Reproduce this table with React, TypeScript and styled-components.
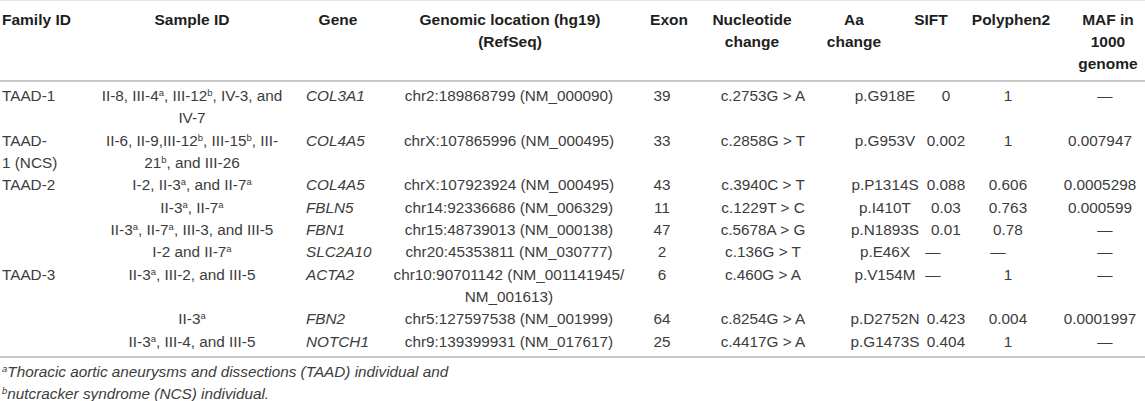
import React from "react";
import styled, { createGlobalStyle } from "styled-components";

const Global = createGlobalStyle`
  html, body { margin: 0; padding: 0; background: #ffffff; }
  body { font-family: "Liberation Sans", Arial, sans-serif; }
`;

const COLS = "97px 190px 102px 242px 76px 90px 114px 40px 120px 74px";

const Table = styled.div`
  width: 1145px;
  border-top: 1px solid #e4e4e4;
  font-size: 15.3px;
  line-height: 22px;
`;

const HeaderRow = styled.div`
  display: grid;
  grid-template-columns: ${COLS};
  padding: 8px 0 5px;
  border-bottom: 2px solid #c9c9c9;
`;

const HeadCell = styled.div<{ $left?: boolean }>`
  font-weight: 700;
  font-size: 15.5px;
  color: #1e1e1e;
  white-space: nowrap;
  display: flex;
  flex-direction: column;
  align-items: ${(p) => (p.$left ? "flex-start" : "center")};
  text-align: ${(p) => (p.$left ? "left" : "center")};
  padding-left: ${(p) => (p.$left ? "2px" : "0")};
`;

const Body = styled.div`
  padding: 3px 0 3px;
  border-bottom: 2px solid #c9c9c9;
  line-height: 22.35px;
`;

const BodyRow = styled.div`
  display: grid;
  grid-template-columns: ${COLS};
`;

const Cell = styled.div<{ $left?: number; $shift?: number; $italic?: boolean }>`
  color: #3c3c3c;
  white-space: nowrap;
  display: flex;
  flex-direction: column;
  font-style: ${(p) => (p.$italic ? "italic" : "normal")};
  align-items: ${(p) => (p.$left !== undefined ? "flex-start" : "center")};
  text-align: ${(p) => (p.$left !== undefined ? "left" : "center")};
  padding-left: ${(p) =>
    p.$left !== undefined ? p.$left : Math.max(0, (p.$shift ?? 0) * 2)}px;
  padding-right: ${(p) =>
    p.$left !== undefined ? 0 : Math.max(0, -(p.$shift ?? 0) * 2)}px;
`;

const Text = styled.span`
  display: block;
`;

const Sup = styled.sup`
  font-size: 0.62em;
  line-height: 0;
  vertical-align: 0.55em;
`;

const Notes = styled.div`
  padding: 3px 0 0 2px;
  font-size: 15.3px;
  line-height: 22px;
  font-style: italic;
  color: #3c3c3c;
`;

type Row = {
  fam: React.ReactNode;
  sample: React.ReactNode;
  gene: string;
  loc: React.ReactNode;
  exon: string;
  nuc: string;
  aa: string;
  sift: string;
  poly: string;
  maf: string;
};

const a = <Sup>a</Sup>;
const b = <Sup>b</Sup>;
const D = "\u2014";

const rows: Row[] = [
  {
    fam: "TAAD-1",
    sample: (
      <>
        II-8, III-4{a}, III-12{b}, IV-3, and
        <br />
        IV-7
      </>
    ),
    gene: "COL3A1",
    loc: "chr2:189868799 (NM_000090)",
    exon: "39",
    nuc: "c.2753G > A",
    aa: "p.G918E",
    sift: "0",
    poly: "1",
    maf: D,
  },
  {
    fam: (
      <>
        TAAD-
        <br />1 (NCS)
      </>
    ),
    sample: (
      <>
        II-6, II-9,III-12{b}, III-15{b}, III-
        <br />
        21{b}, and III-26
      </>
    ),
    gene: "COL4A5",
    loc: "chrX:107865996 (NM_000495)",
    exon: "33",
    nuc: "c.2858G > T",
    aa: "p.G953V",
    sift: "0.002",
    poly: "1",
    maf: "0.007947",
  },
  {
    fam: "TAAD-2",
    sample: <>I-2, II-3{a}, and II-7{a}</>,
    gene: "COL4A5",
    loc: "chrX:107923924 (NM_000495)",
    exon: "43",
    nuc: "c.3940C > T",
    aa: "p.P1314S",
    sift: "0.088",
    poly: "0.606",
    maf: "0.0005298",
  },
  {
    fam: "",
    sample: <>II-3{a}, II-7{a}</>,
    gene: "FBLN5",
    loc: "chr14:92336686 (NM_006329)",
    exon: "11",
    nuc: "c.1229T > C",
    aa: "p.I410T",
    sift: "0.03",
    poly: "0.763",
    maf: "0.000599",
  },
  {
    fam: "",
    sample: <>II-3{a}, II-7{a}, III-3, and III-5</>,
    gene: "FBN1",
    loc: "chr15:48739013 (NM_000138)",
    exon: "47",
    nuc: "c.5678A > G",
    aa: "p.N1893S",
    sift: "0.01",
    poly: "0.78",
    maf: D,
  },
  {
    fam: "",
    sample: <>I-2 and II-7{a}</>,
    gene: "SLC2A10",
    loc: "chr20:45353811 (NM_030777)",
    exon: "2",
    nuc: "c.136G > T",
    aa: "p.E46X",
    sift: D,
    poly: D,
    maf: D,
  },
  {
    fam: "TAAD-3",
    sample: <>II-3{a}, III-2, and III-5</>,
    gene: "ACTA2",
    loc: (
      <>
        chr10:90701142 (NM_001141945/
        <br />
        NM_001613)
      </>
    ),
    exon: "6",
    nuc: "c.460G > A",
    aa: "p.V154M",
    sift: D,
    poly: "1",
    maf: D,
  },
  {
    fam: "",
    sample: <>II-3{a}</>,
    gene: "FBN2",
    loc: "chr5:127597538 (NM_001999)",
    exon: "64",
    nuc: "c.8254G > A",
    aa: "p.D2752N",
    sift: "0.423",
    poly: "0.004",
    maf: "0.0001997",
  },
  {
    fam: "",
    sample: <>II-3{a}, III-4, and III-5</>,
    gene: "NOTCH1",
    loc: "chr9:139399931 (NM_017617)",
    exon: "25",
    nuc: "c.4417G > A",
    aa: "p.G1473S",
    sift: "0.404",
    poly: "1",
    maf: D,
  },
];

export default function App() {
  return (
    <>
      <Global />
      <Table>
        <HeaderRow>
          <HeadCell $left>
            <Text>Family ID</Text>
          </HeadCell>
          <HeadCell>
            <Text>Sample ID</Text>
          </HeadCell>
          <HeadCell>
            <Text>Gene</Text>
          </HeadCell>
          <HeadCell>
            <Text>
              Genomic location (hg19)
              <br />
              (RefSeq)
            </Text>
          </HeadCell>
          <HeadCell>
            <Text>Exon</Text>
          </HeadCell>
          <HeadCell>
            <Text>
              Nucleotide
              <br />
              change
            </Text>
          </HeadCell>
          <HeadCell>
            <Text>
              Aa
              <br />
              change
            </Text>
          </HeadCell>
          <HeadCell>
            <Text>SIFT</Text>
          </HeadCell>
          <HeadCell>
            <Text>Polyphen2</Text>
          </HeadCell>
          <HeadCell>
            <Text>
              MAF in
              <br />
              1000
              <br />
              genome
            </Text>
          </HeadCell>
        </HeaderRow>
        <Body>
          {rows.map((r, i) => (
            <BodyRow key={i}>
              <Cell $left={2}>
                <Text>{r.fam}</Text>
              </Cell>
              <Cell>
                <Text>{r.sample}</Text>
              </Cell>
              <Cell $left={19} $italic>
                <Text>{r.gene}</Text>
              </Cell>
              <Cell $shift={-1}>
                <Text>{r.loc}</Text>
              </Cell>
              <Cell $shift={-7}>
                <Text>{r.exon}</Text>
              </Cell>
              <Cell $shift={11}>
                <Text>{r.nuc}</Text>
              </Cell>
              <Cell $shift={31}>
                <Text>{r.aa}</Text>
              </Cell>
              <Cell $shift={r.sift === D ? 2 : 15}>
                <Text>{r.sift}</Text>
              </Cell>
              <Cell $shift={r.poly === D ? -13 : -3}>
                <Text>{r.poly}</Text>
              </Cell>
              <Cell $shift={r.maf === D ? -3 : -8}>
                <Text>{r.maf}</Text>
              </Cell>
            </BodyRow>
          ))}
        </Body>
        <Notes>
          <Sup>a</Sup>Thoracic aortic aneurysms and dissections (TAAD) individual and
          <br />
          <Sup>b</Sup>nutcracker syndrome (NCS) individual.
        </Notes>
      </Table>
    </>
  );
}
